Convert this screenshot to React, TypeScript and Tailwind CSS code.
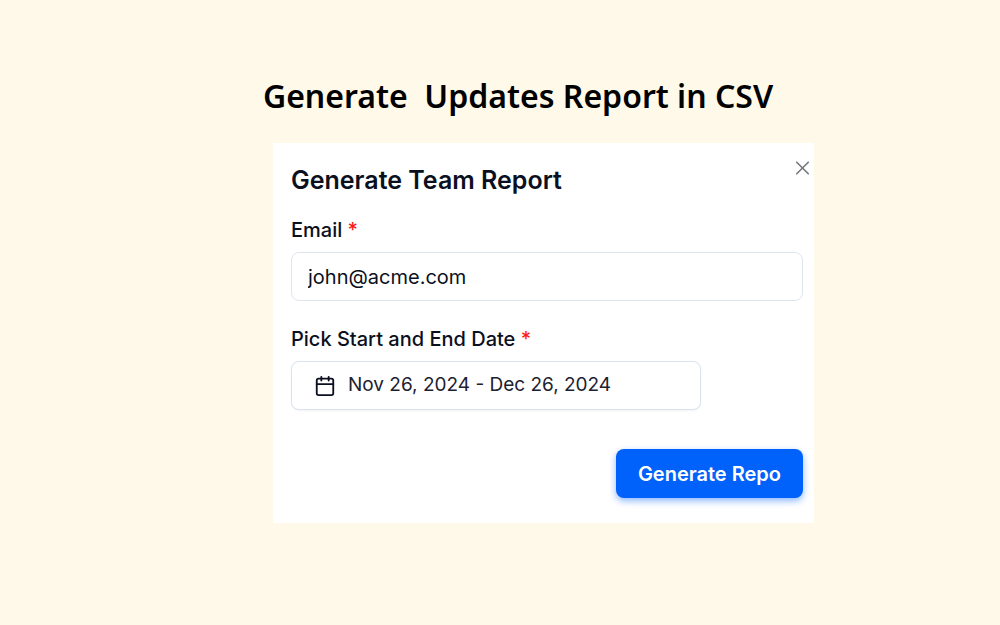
import { Calendar, X } from 'lucide-react';

const RequiredMark = () => <span className="text-[#ff1a1a]">*</span>;

const ReportForm = () => {
  return (
    <form
      className="relative w-full max-w-[541px] bg-white pb-[25px] pl-[18px] pr-[11px] pt-[21px] font-['Inter',sans-serif] text-[#0b1020]"
      onSubmit={(e) => e.preventDefault()}
    >
      <button
        type="button"
        aria-label="Close"
        className="absolute right-0 top-[13px] text-[#77787f]"
      >
        <X width={23} height={24} strokeWidth={1.75} />
      </button>

      <h2 className="text-[25px] font-semibold leading-8">
        Generate Team Report
      </h2>

      <label
        htmlFor="email"
        className="mt-5 block text-[20px] font-medium leading-7"
      >
        Email <RequiredMark />
      </label>
      <input
        id="email"
        type="email"
        defaultValue="john@acme.com"
        className="mt-2 block h-[49px] w-full rounded-lg border border-[#dfe5ee] bg-white px-4 text-[20px] outline-none"
      />

      <label
        htmlFor="period"
        className="mt-6 block text-[20px] font-medium leading-7"
      >
        Pick Start and End Date <RequiredMark />
      </label>
      <button
        id="period"
        type="button"
        className="mt-2 flex h-[49px] w-4/5 items-center gap-3 rounded-lg border border-[#dbe3f1] bg-white px-[22px] text-[19px] text-[#1c2130] shadow-xs"
      >
        <Calendar
          width={22}
          height={22}
          strokeWidth={2}
          className="text-[#0b1020]"
        />
        Nov 26, 2024 - Dec 26, 2024
      </button>

      <div className="mt-[39px] flex justify-end">
        <button
          type="submit"
          className="h-[49px] rounded-lg bg-[#0061fb] px-[22px] text-[20px] font-semibold text-white shadow-[0_3px_7px_rgba(0,97,251,0.45)]"
        >
          Generate Repo
        </button>
      </div>
    </form>
  );
};

const App = () => {
  return (
    <div className="flex min-h-screen flex-col items-center bg-[#fff9e9] pt-[72px]">
      <h1 className="whitespace-pre pl-9 font-['Noto_Sans',sans-serif] text-[32px] font-semibold leading-[48px] text-black">
        {'Generate  Updates Report in CSV'}
      </h1>
      <main className="mt-[23px] flex w-full justify-center pl-[87px]">
        <ReportForm />
      </main>
    </div>
  );
};

export default App;
